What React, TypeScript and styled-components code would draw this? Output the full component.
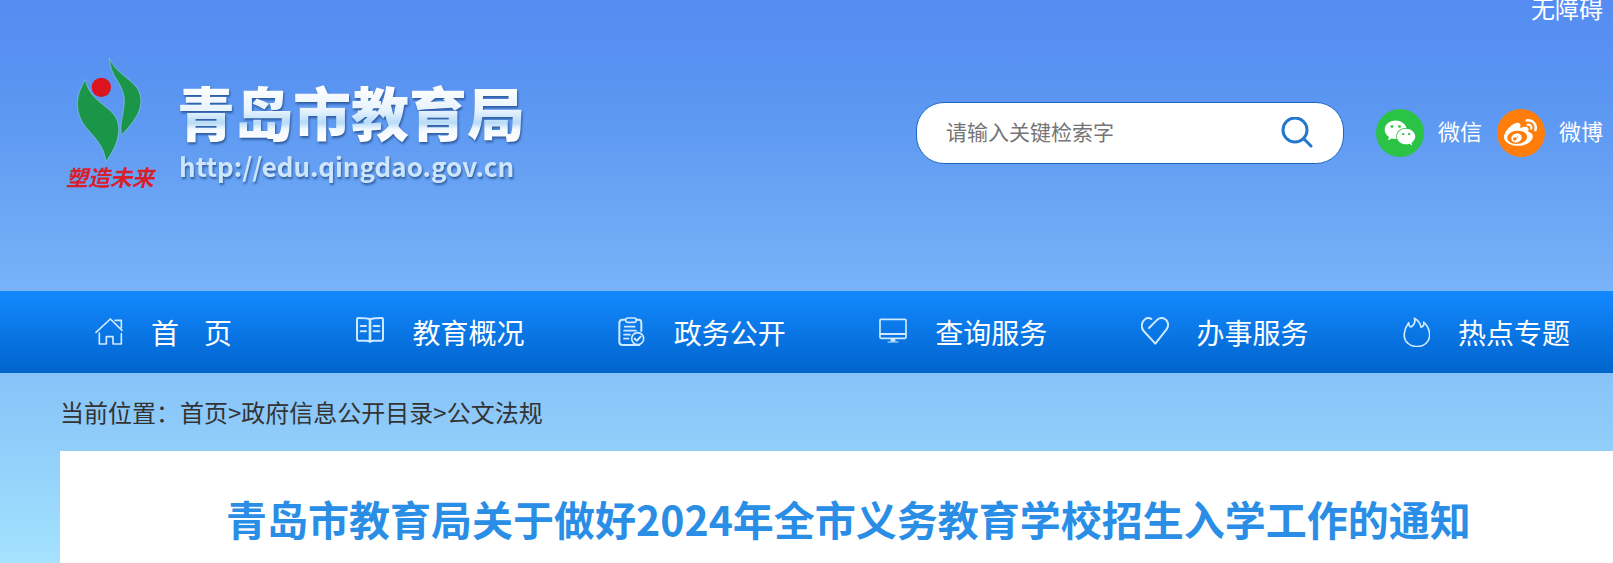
import React from "react";
import styled, { createGlobalStyle } from "styled-components";
import { FaWeibo, FaWeixin } from "react-icons/fa";

const GlobalStyle = createGlobalStyle`
  *, *::before, *::after { box-sizing: border-box; }
  body {
    margin: 0;
    font-family: "Microsoft YaHei", "Noto Sans CJK SC", sans-serif;
    color: #333;
  }
  a { color: inherit; text-decoration: none; }
`;

const Page = styled.div`
  display: flex;
  flex-direction: column;
  min-height: 100vh;
  overflow: hidden;
  background: linear-gradient(#548cf1 0, #5c97f2 110px, #78b2f7 290px, #88c4f9 380px, #92cffa 455px, #a4e2fe 563px);
`;

const Header = styled.header`
  display: flex;
  flex-direction: column;
  padding: 0 10px 102px 66px;
`;

const TopBar = styled.div`
  display: flex;
  justify-content: flex-end;
  height: 57px;
  color: #fff;
  font-size: 24px;
  line-height: 16px;
`;

const HeaderRow = styled.div`
  display: flex;
  justify-content: space-between;
  align-items: flex-start;
  height: 132px;
`;

const Brand = styled.a`
  display: flex;
  gap: 23px;
`;

const Emblem = styled.div`
  display: flex;
  flex-direction: column;
  width: 88px;
  svg { display: block; width: 88px; height: 106px; }
`;

const Motto = styled.span`
  color: #d8202c;
  font-size: 22px;
  font-style: italic;
  font-weight: 700;
  line-height: 26px;
  white-space: nowrap;
`;

const BrandText = styled.div`
  display: flex;
  flex-direction: column;
  gap: 4px;
  padding-top: 19px;
  white-space: nowrap;
  filter: drop-shadow(1px 2px 1px rgba(30, 70, 130, 0.75));
`;

const BrandName = styled.span`
  font-size: 58px;
  font-weight: 900;
  line-height: 70px;
  color: transparent;
  background: linear-gradient(#fff 15%, #e6f2fd 50%, #b6dbf8 67%, #f0f8ff 76%, #fff 90%);
  background-clip: text;
  -webkit-background-clip: text;
`;

const BrandUrl = styled.span`
  padding-left: 2px;
  color: #cde6fb;
  font-size: 26px;
  font-weight: 700;
  line-height: 32px;
`;

const Tools = styled.div`
  display: flex;
  align-items: center;
  padding-top: 45px;
`;

const Search = styled.form`
  display: flex;
  align-items: center;
  width: 428px;
  height: 62px;
  margin-right: 32px;
  padding: 0 30px 0 29px;
  border: 1px solid #1c68c0;
  border-radius: 28px;
  background: #fff;
`;

const SearchInput = styled.input`
  flex: 1;
  min-width: 0;
  padding: 0 0 4px;
  border: 0;
  outline: 0;
  background: none;
  font: 21px "Microsoft YaHei", "Noto Sans CJK SC", sans-serif;
  &::placeholder { color: #757575; opacity: 1; }
`;

const SearchButton = styled.button`
  padding: 0;
  border: 0;
  background: none;
  cursor: pointer;
  svg { display: block; width: 32px; height: 32px; }
`;

const Social = styled.a`
  display: flex;
  align-items: flex-start;
  gap: 14px;
  color: #fff;
  font-size: 22px;
  line-height: 42px;
  & + & { margin-left: 15px; }
`;

const SocialBadge = styled.span<{ $color: string }>`
  display: flex;
  align-items: center;
  justify-content: center;
  width: 48px;
  height: 48px;
  border-radius: 50%;
  background: ${(p) => p.$color};
`;

const Nav = styled.nav`
  background: linear-gradient(#1389ff, #0064cc);
`;

const NavList = styled.ul`
  display: flex;
  justify-content: space-between;
  margin: 0;
  padding: 0 39px 0 95px;
  list-style: none;
`;

const NavLink = styled.a`
  display: flex;
  align-items: center;
  gap: 28px;
  width: 172px;
  height: 82px;
  color: #fff;
  font-size: 28px;
  white-space: pre;
  svg { flex: none; width: 28px; height: 30px; }
`;

const Breadcrumb = styled.div`
  padding: 0 60px;
  font-size: 24px;
  line-height: 78px;
`;

const Article = styled.main`
  flex: 1;
  margin-left: 60px;
  padding: 36px 0 12px 24px;
  background: #fff;
`;

const Title = styled.h1`
  margin: 0;
  color: #2b8ee6;
  font-size: 41px;
  font-weight: 700;
  line-height: 62px;
  text-align: center;
`;

const Icon = ({ children }: { children: React.ReactNode }) => (
  <svg viewBox="0 0 84 90" fill="none" stroke="#cfe9ff" strokeWidth="5" strokeLinecap="round" strokeLinejoin="round" aria-hidden="true">
    {children}
  </svg>
);

const HomeIcon = () => (
  <Icon>
    <path d="M3 46 46 6l35 34M60 10h19v22M13 48v33h21V59h20v22h25V50" />
  </Icon>
);

const BookIcon = () => (
  <Icon>
    <path d="M42 7C36 3 24 3 7 3q-4 0-4 4v60q0 4 4 4h23q8 0 12 3 4-3 12-3h23q4 0 4-4V7q0-4-4-4-23 0-35 4Z" strokeWidth="6" />
    <path d="M42 7v66" strokeWidth="8" />
    <path d="M14 27h16M14 43h16M53 27h17M53 43h17" strokeWidth="6" />
  </Icon>
);

const ClipboardIcon = () => (
  <Icon>
    <path d="M22 8h-8Q4 8 4 18v56q0 10 10 10h50M54 8h8q8 0 8 10v24" strokeWidth="6" />
    <rect x="23" y="3" width="32" height="13" rx="6" />
    <path d="M20 29h30M18 41h36M18 53h18M18 65h14" />
    <circle cx="59" cy="65" r="18" />
    <path d="m50 65 7 6 11-12" strokeWidth="6" />
  </Icon>
);

const MonitorIcon = () => (
  <Icon>
    <rect x="3" y="7" width="78" height="57" rx="3" />
    <path d="M4 51h76" strokeWidth="6" />
    <path d="M42 64v10" strokeWidth="14" strokeLinecap="butt" />
    <path d="M27 75h30" strokeWidth="3" />
  </Icon>
);

const HeartIcon = () => (
  <Icon>
    <path d="M24 33 46 11C52 3 61 2 68 4c14 5 17 23 8 34L43 80 8 42C-1 32 1 14 13 6q9-6 18 0" strokeWidth="6" />
  </Icon>
);

const FlameIcon = () => (
  <Icon>
    <path d="M20 17C21 27 23 30 27 30 38 22 41 13 37 4c12 6 18 15 20 27 8-3 10-9 8-16 20 19 24 48 8 63-14 14-42 14-56 0C1 64 5 38 20 17Z" />
  </Icon>
);

const navItems = [
  { label: "首\u00a0\u00a0\u00a0 页", icon: <HomeIcon /> },
  { label: "教育概况", icon: <BookIcon /> },
  { label: "政务公开", icon: <ClipboardIcon /> },
  { label: "查询服务", icon: <MonitorIcon /> },
  { label: "办事服务", icon: <HeartIcon /> },
  { label: "热点专题", icon: <FlameIcon /> },
];

export default function App() {
  return (
    <Page>
      <GlobalStyle />
      <Header>
        <TopBar>
          <a href="#accessible">无障碍</a>
        </TopBar>
        <HeaderRow>
          <Brand href="#home">
            <Emblem>
              <svg viewBox="48 36 264 318" aria-hidden="true">
                <g stroke="#8fc4e8" strokeWidth="2">
                  <path fill="#1b9649" d="M107 104C75 150 76 197 99 235c20 31 62 58 69 114 34-46 48-91 31-129-20-40-82-52-92-116Z" />
                  <path fill="#1b9649" d="M178 39c3 67 56 80 43 151-3 27-13 55-6 80 45-47 73-89 49-137-23-35-67-48-86-94Z" />
                </g>
                <circle cx="154" cy="127" r="29" fill="#dc1420" />
              </svg>
              <Motto>塑造未来</Motto>
            </Emblem>
            <BrandText>
              <BrandName>青岛市教育局</BrandName>
              <BrandUrl>http://edu.qingdao.gov.cn</BrandUrl>
            </BrandText>
          </Brand>
          <Tools>
            <Search role="search" onSubmit={(e) => e.preventDefault()}>
              <SearchInput type="text" aria-label="请输入关键检索字" placeholder="请输入关键检索字" />
              <SearchButton type="submit" aria-label="搜索">
                <svg viewBox="0 0 32 32" fill="none" stroke="#2478cc" strokeWidth="3" strokeLinecap="round">
                  <circle cx="14" cy="13" r="12" />
                  <path d="m23 22 7 7" />
                </svg>
              </SearchButton>
            </Search>
            <Social href="#wechat">
              <SocialBadge $color="#2bc346"><FaWeixin size={32} /></SocialBadge>
              微信
            </Social>
            <Social href="#weibo">
              <SocialBadge $color="#ff7d0a"><FaWeibo size={33} /></SocialBadge>
              微博
            </Social>
          </Tools>
        </HeaderRow>
      </Header>
      <Nav>
        <NavList>
          {navItems.map((item) => (
            <li key={item.label}>
              <NavLink href="#nav">
                {item.icon}
                {item.label}
              </NavLink>
            </li>
          ))}
        </NavList>
      </Nav>
      <Breadcrumb>
        当前位置：<a href="#home">首页</a>&gt;<a href="#catalog">政府信息公开目录</a>&gt;<a href="#documents">公文法规</a>
      </Breadcrumb>
      <Article>
        <Title>青岛市教育局关于做好2024年全市义务教育学校招生入学工作的通知</Title>
      </Article>
    </Page>
  );
}
